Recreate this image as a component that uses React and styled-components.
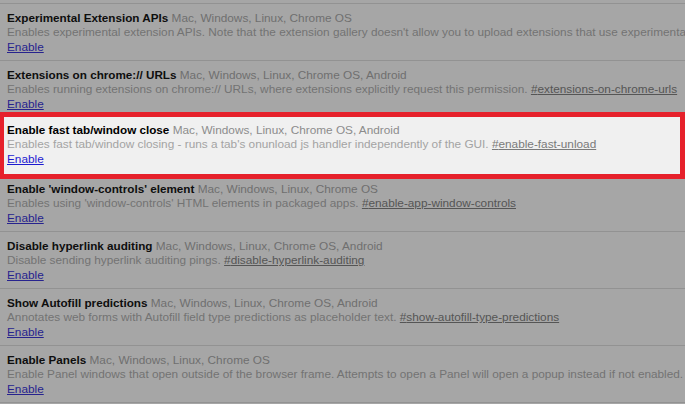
import React from "react";
import styled, { createGlobalStyle } from "styled-components";

const GlobalStyle = createGlobalStyle`
  html, body {
    margin: 0;
    padding: 0;
    background: #a6a6a6;
    overflow: hidden;
  }
  body {
    font-family: "Liberation Sans", Arial, Helvetica, sans-serif;
    font-size: 11.8px;
  }
`;

const StyledPage = styled.div`
  width: 685px;
  height: 404px;
  overflow: hidden;
  padding-top: 3px;
  box-sizing: border-box;
`;

const StyledExperimentList = styled.div`
  display: flex;
  flex-direction: column;
  border-bottom: 1px solid #929292;
`;

const StyledExperiment = styled.div`
  position: relative;
  box-sizing: border-box;
  height: 57px;
  padding: 6.5px 0 0 7px;
  border-top: 1px solid #929292;
  line-height: 14.5px;
  white-space: nowrap;
  overflow: hidden;
  flex-shrink: 0;

  ${({ $highlighted }) =>
    $highlighted &&
    `
    z-index: 1;
    height: 67px;
    margin: -5px 0 -5px;
    padding: 5.5px 0 0 3px;
    border: 5px solid #e6212b;
    border-left-width: 4px;
    background: #f0f0f0;
  `}
`;

const StyledTitle = styled.div`
  color: ${({ $highlighted }) => ($highlighted ? "#000" : "#0e0e0e")};
`;

const StyledName = styled.span`
  font-weight: bold;
  font-size: 11.7px;
`;

const StyledPlatforms = styled.span`
  color: ${({ $highlighted }) => ($highlighted ? "#8c8c8c" : "#6f6f6f")};
`;

const StyledDescription = styled.div`
  color: ${({ $highlighted }) => ($highlighted ? "#a3a3a3" : "#737373")};
`;

const StyledPermalink = styled.a`
  color: ${({ $highlighted }) => ($highlighted ? "#7a7a7a" : "#555")};
  text-decoration: underline;
`;

const StyledEnableLink = styled.a`
  color: ${({ $highlighted }) => ($highlighted ? "#1d1ad0" : "#27238e")};
  text-decoration: underline;
  cursor: pointer;
`;

const experiments = [
  {
    name: "Experimental Extension APIs",
    platforms: "Mac, Windows, Linux, Chrome OS",
    description:
      "Enables experimental extension APIs. Note that the extension gallery doesn't allow you to upload extensions that use experimental",
  },
  {
    name: "Extensions on chrome:// URLs",
    platforms: "Mac, Windows, Linux, Chrome OS, Android",
    description:
      "Enables running extensions on chrome:// URLs, where extensions explicitly request this permission.",
    hash: "extensions-on-chrome-urls",
  },
  {
    name: "Enable fast tab/window close",
    platforms: "Mac, Windows, Linux, Chrome OS, Android",
    description:
      "Enables fast tab/window closing - runs a tab's onunload js handler independently of the GUI.",
    hash: "enable-fast-unload",
    highlighted: true,
  },
  {
    name: "Enable 'window-controls' element",
    platforms: "Mac, Windows, Linux, Chrome OS",
    description:
      "Enables using 'window-controls' HTML elements in packaged apps.",
    hash: "enable-app-window-controls",
  },
  {
    name: "Disable hyperlink auditing",
    platforms: "Mac, Windows, Linux, Chrome OS, Android",
    description: "Disable sending hyperlink auditing pings.",
    hash: "disable-hyperlink-auditing",
  },
  {
    name: "Show Autofill predictions",
    platforms: "Mac, Windows, Linux, Chrome OS, Android",
    description:
      "Annotates web forms with Autofill field type predictions as placeholder text.",
    hash: "show-autofill-type-predictions",
  },
  {
    name: "Enable Panels",
    platforms: "Mac, Windows, Linux, Chrome OS",
    description:
      "Enable Panel windows that open outside of the browser frame. Attempts to open a Panel will open a popup instead if not enabled.",
  },
];

const App = () => {
  const rows = experiments.map((experiment) => {
    const { name, platforms, description, hash, highlighted } = experiment;
    return (
      <StyledExperiment key={name} $highlighted={highlighted}>
        <StyledTitle $highlighted={highlighted}>
          <StyledName>{name}</StyledName>{" "}
          <StyledPlatforms $highlighted={highlighted}>{platforms}</StyledPlatforms>
        </StyledTitle>
        <StyledDescription $highlighted={highlighted}>
          {description}
          {hash && (
            <>
              {" "}
              <StyledPermalink href={`#${hash}`} $highlighted={highlighted}>
                #{hash}
              </StyledPermalink>
            </>
          )}
        </StyledDescription>
        <div>
          <StyledEnableLink $highlighted={highlighted}>Enable</StyledEnableLink>
        </div>
      </StyledExperiment>
    );
  });

  return (
    <>
      <GlobalStyle />
      <StyledPage>
        <StyledExperimentList>{rows}</StyledExperimentList>
      </StyledPage>
    </>
  );
};

export default App;
